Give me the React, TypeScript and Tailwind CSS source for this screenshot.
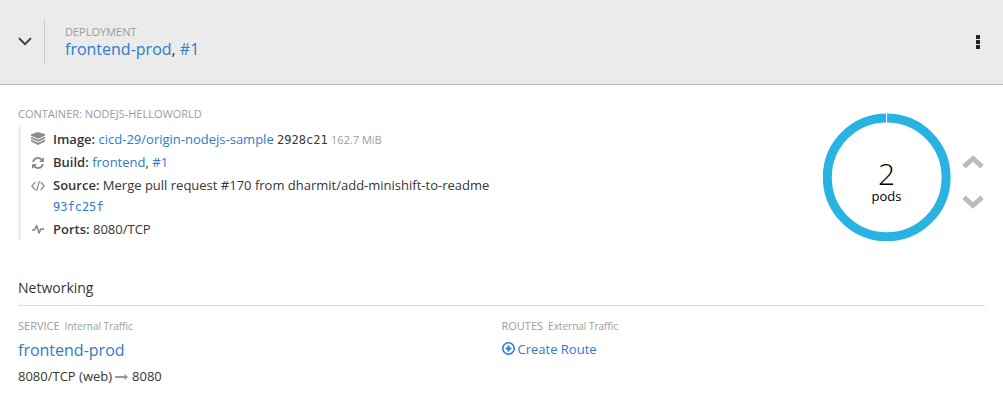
import type { ReactNode } from "react";

const link = "text-[#2d7ccb] hover:underline";
const mono = "font-['DejaVu_Sans_Mono',monospace] text-[12px] leading-4";

function LayersIcon() {
  return (
    <svg className="mb-[2px]" width="14" height="13" viewBox="0 0 14 13" fill="#8b8d8f" aria-hidden="true">
      <path d="M7 0 14 2.2V3.8L7 6.8 0 3.8V2.2Z" />
      <path d="M0 4.7 7 7.7 14 4.7V6.6L7 9.8 0 6.6Z" />
      <path d="M0 7.5 7 10.7 14 7.5V9.6L7 12.9 0 9.6Z" />
    </svg>
  );
}

function RefreshIcon() {
  return (
    <svg width="12" height="12" viewBox="0 0 1536 1536" fill="#8b8d8f" aria-hidden="true">
      <path d="M1511 928q0 5-1 7-64 268-268 434.5t-478 166.5q-146 0-282.5-55t-243.5-157l-129 129q-19 19-45 19t-45-19-19-45v-448q0-26 19-45t45-19h448q26 0 45 19t19 45-19 45l-137 137q71 66 161 102t187 36q134 0 250-65t186-179q11-17 53-117 8-23 30-23h192q13 0 22.5 9.5t9.5 22.5zm25-800v448q0 26-19 45t-45 19h-448q-26 0-45-19t-19-45 19-45l138-138q-148-137-349-137-134 0-250 65t-186 179q-11 17-53 117-8 23-30 23h-199q-13 0-22.5-9.5t-9.5-22.5v-7q65-268 270-434.5t480-166.5q146 0 284 55.5t245 156.5l130-129q19-19 45-19t45 19 19 45z" />
    </svg>
  );
}

function CodeIcon() {
  return (
    <svg width="14" height="12" viewBox="0 0 14 12" fill="none" stroke="#8b8d8f" strokeWidth="1.2" aria-hidden="true">
      <path d="M4.4 2 0.8 6 4.4 10M9.6 2 13.2 6 9.6 10M8.4 1 5.6 11" />
    </svg>
  );
}

function PulseIcon() {
  return (
    <svg width="12" height="12" viewBox="0 0 12 12" fill="none" stroke="#8b8d8f" strokeWidth="1.7" strokeLinejoin="round" aria-hidden="true">
      <path d="M0 6H2.6L4.6 1.6 7 9 8.8 5.2H12" />
    </svg>
  );
}

function Detail({ icon, label, children }: { icon: ReactNode; label: string; children: ReactNode }) {
  return (
    <li className="flex">
      <span className="flex h-[21px] w-8 shrink-0 items-center justify-center pl-[2px]">{icon}</span>
      <div className="min-w-0">
        <span className="font-semibold">{label}:</span> {children}
      </div>
    </li>
  );
}

function PodDonut() {
  return (
    <div className="grid size-32 place-items-center">
      <svg className="col-start-1 row-start-1" width="128" height="128" viewBox="0 0 128 128" aria-hidden="true">
        <circle cx="63.7" cy="64.4" r="59.4" fill="none" stroke="#29b3e3" strokeWidth="9" />
        <path d="M63.5 0V10" stroke="#fff" strokeWidth="1" />
      </svg>
      <div className="col-start-1 row-start-1 pt-[10px] pr-px text-center text-black">
        <div className="text-[30px] leading-7 font-light">2</div>
        <div className="text-[13px] leading-4">pods</div>
      </div>
    </div>
  );
}

function ScaleButton({ label, d }: { label: string; d: string }) {
  return (
    <button type="button" aria-label={label} className="block">
      <svg width="22" height="14" viewBox="0 0 22 14" fill="none" stroke="#bbb" strokeWidth="5">
        <path d={d} />
      </svg>
    </button>
  );
}

function SectionLabel({ title, note }: { title: string; note: string }) {
  return (
    <div className="text-[11px] leading-[18px] text-[#9c9c9c]">
      <span className="uppercase">{title}</span>
      <span className="ml-[5px] text-[10px]">{note}</span>
    </div>
  );
}

export default function App() {
  return (
    <main className="min-h-screen bg-white font-['Open_Sans','Noto_Sans',sans-serif] text-[13px] leading-[21px] text-[#363636]">
      <header className="flex items-center border-b border-[#bbb] bg-[#ebebeb] px-[18px] pt-[19px] pb-5">
        <button type="button" aria-label="Collapse deployment" className="mr-3">
          <svg width="14" height="10" viewBox="0 0 14 10" fill="none" stroke="#363636" strokeWidth="1.8">
            <path d="M1 1.2 7 7.2 13 1.2" />
          </svg>
        </button>
        <div className="flex h-[45px] flex-1 flex-col justify-center border-l border-[#ccc] pb-[2px] pl-5">
          <div className="text-[11px] leading-4 text-[#9c9c9c] uppercase">Deployment</div>
          <h1 className="text-[16px] leading-[18px]">
            <a href="#deployment" className={link}>frontend-prod</a>,{" "}
            <a href="#revision" className={link}>#1</a>
          </h1>
        </div>
        <button type="button" aria-label="Actions" className="px-[5px]">
          <svg width="4" height="14" viewBox="0 0 4 14" fill="#222">
            <rect width="4" height="4" rx="0.6" />
            <rect y="5" width="4" height="4" rx="0.6" />
            <rect y="10" width="4" height="4" rx="0.6" />
          </svg>
        </button>
      </header>

      <section className="flex items-start justify-between pt-5 pr-[19px] pl-[18px]">
        <div>
          <h2 className="text-[11px] leading-[18px] text-[#9c9c9c] uppercase">Container: nodejs-helloworld</h2>
          <ul className="mt-1 flex flex-col gap-[2px] border-l-[3px] border-[#eee] pt-[2px]">
            <Detail icon={<LayersIcon />} label="Image">
              <a href="#image" className={link}>cicd-29/origin-nodejs-sample</a>{" "}
              <span className={mono}>2928c21</span>{" "}
              <span className="text-[11px] leading-4 text-[#9c9c9c]">162.7 MiB</span>
            </Detail>
            <Detail icon={<RefreshIcon />} label="Build">
              <a href="#build" className={link}>frontend</a>,{" "}
              <a href="#build-1" className={link}>#1</a>
            </Detail>
            <Detail icon={<CodeIcon />} label="Source">
              Merge pull request #170 from dharmit/add-minishift-to-readme
              <div>
                <span className={mono}>
                  <a href="#commit" className={link}>93fc25f</a>
                </span>
              </div>
            </Detail>
            <Detail icon={<PulseIcon />} label="Ports">8080/TCP</Detail>
          </ul>
        </div>
        <div className="mt-2 flex items-center gap-[11px]">
          <PodDonut />
          <div className="flex flex-col gap-[26px] pt-[10px]">
            <ScaleButton label="Scale up" d="M2 11.6 11 3.5 20 11.6" />
            <ScaleButton label="Scale down" d="M2 2.4 11 10.5 20 2.4" />
          </div>
        </div>
      </section>

      <section className="mx-[18px] mt-[35px]">
        <h2 className="border-b border-[#ddd] pb-[6px] text-[14px] leading-[23px]">Networking</h2>
        <div className="grid grid-cols-2 pt-[11px]">
          <div>
            <SectionLabel title="Service" note="Internal Traffic" />
            <div className="mt-1 text-[16px] leading-[23px]">
              <a href="#service" className={link}>frontend-prod</a>
            </div>
            <div className="mt-1 flex items-center">
              <span>8080/TCP (web)</span>
              <svg className="mx-[3px]" width="14" height="8" viewBox="0 0 14 8" aria-hidden="true">
                <path d="M0 4H11" stroke="#999" strokeWidth="2" />
                <path d="M9.5 1 13.2 4 9.5 7Z" fill="#999" />
              </svg>
              <span>8080</span>
            </div>
          </div>
          <div>
            <SectionLabel title="Routes" note="External Traffic" />
            <a href="#create-route" className="mt-1 flex w-fit items-center gap-[3px] text-[#2d7ccb] hover:underline">
              <svg className="mb-[2px]" width="13" height="13" viewBox="0 0 13 13" fill="none" stroke="#2d7ccb" aria-hidden="true">
                <circle cx="6.5" cy="6.5" r="5.7" strokeWidth="1.6" />
                <path d="M6.5 3.6V9.4M3.6 6.5H9.4" strokeWidth="2" />
              </svg>
              Create Route
            </a>
          </div>
        </div>
      </section>
    </main>
  );
}
